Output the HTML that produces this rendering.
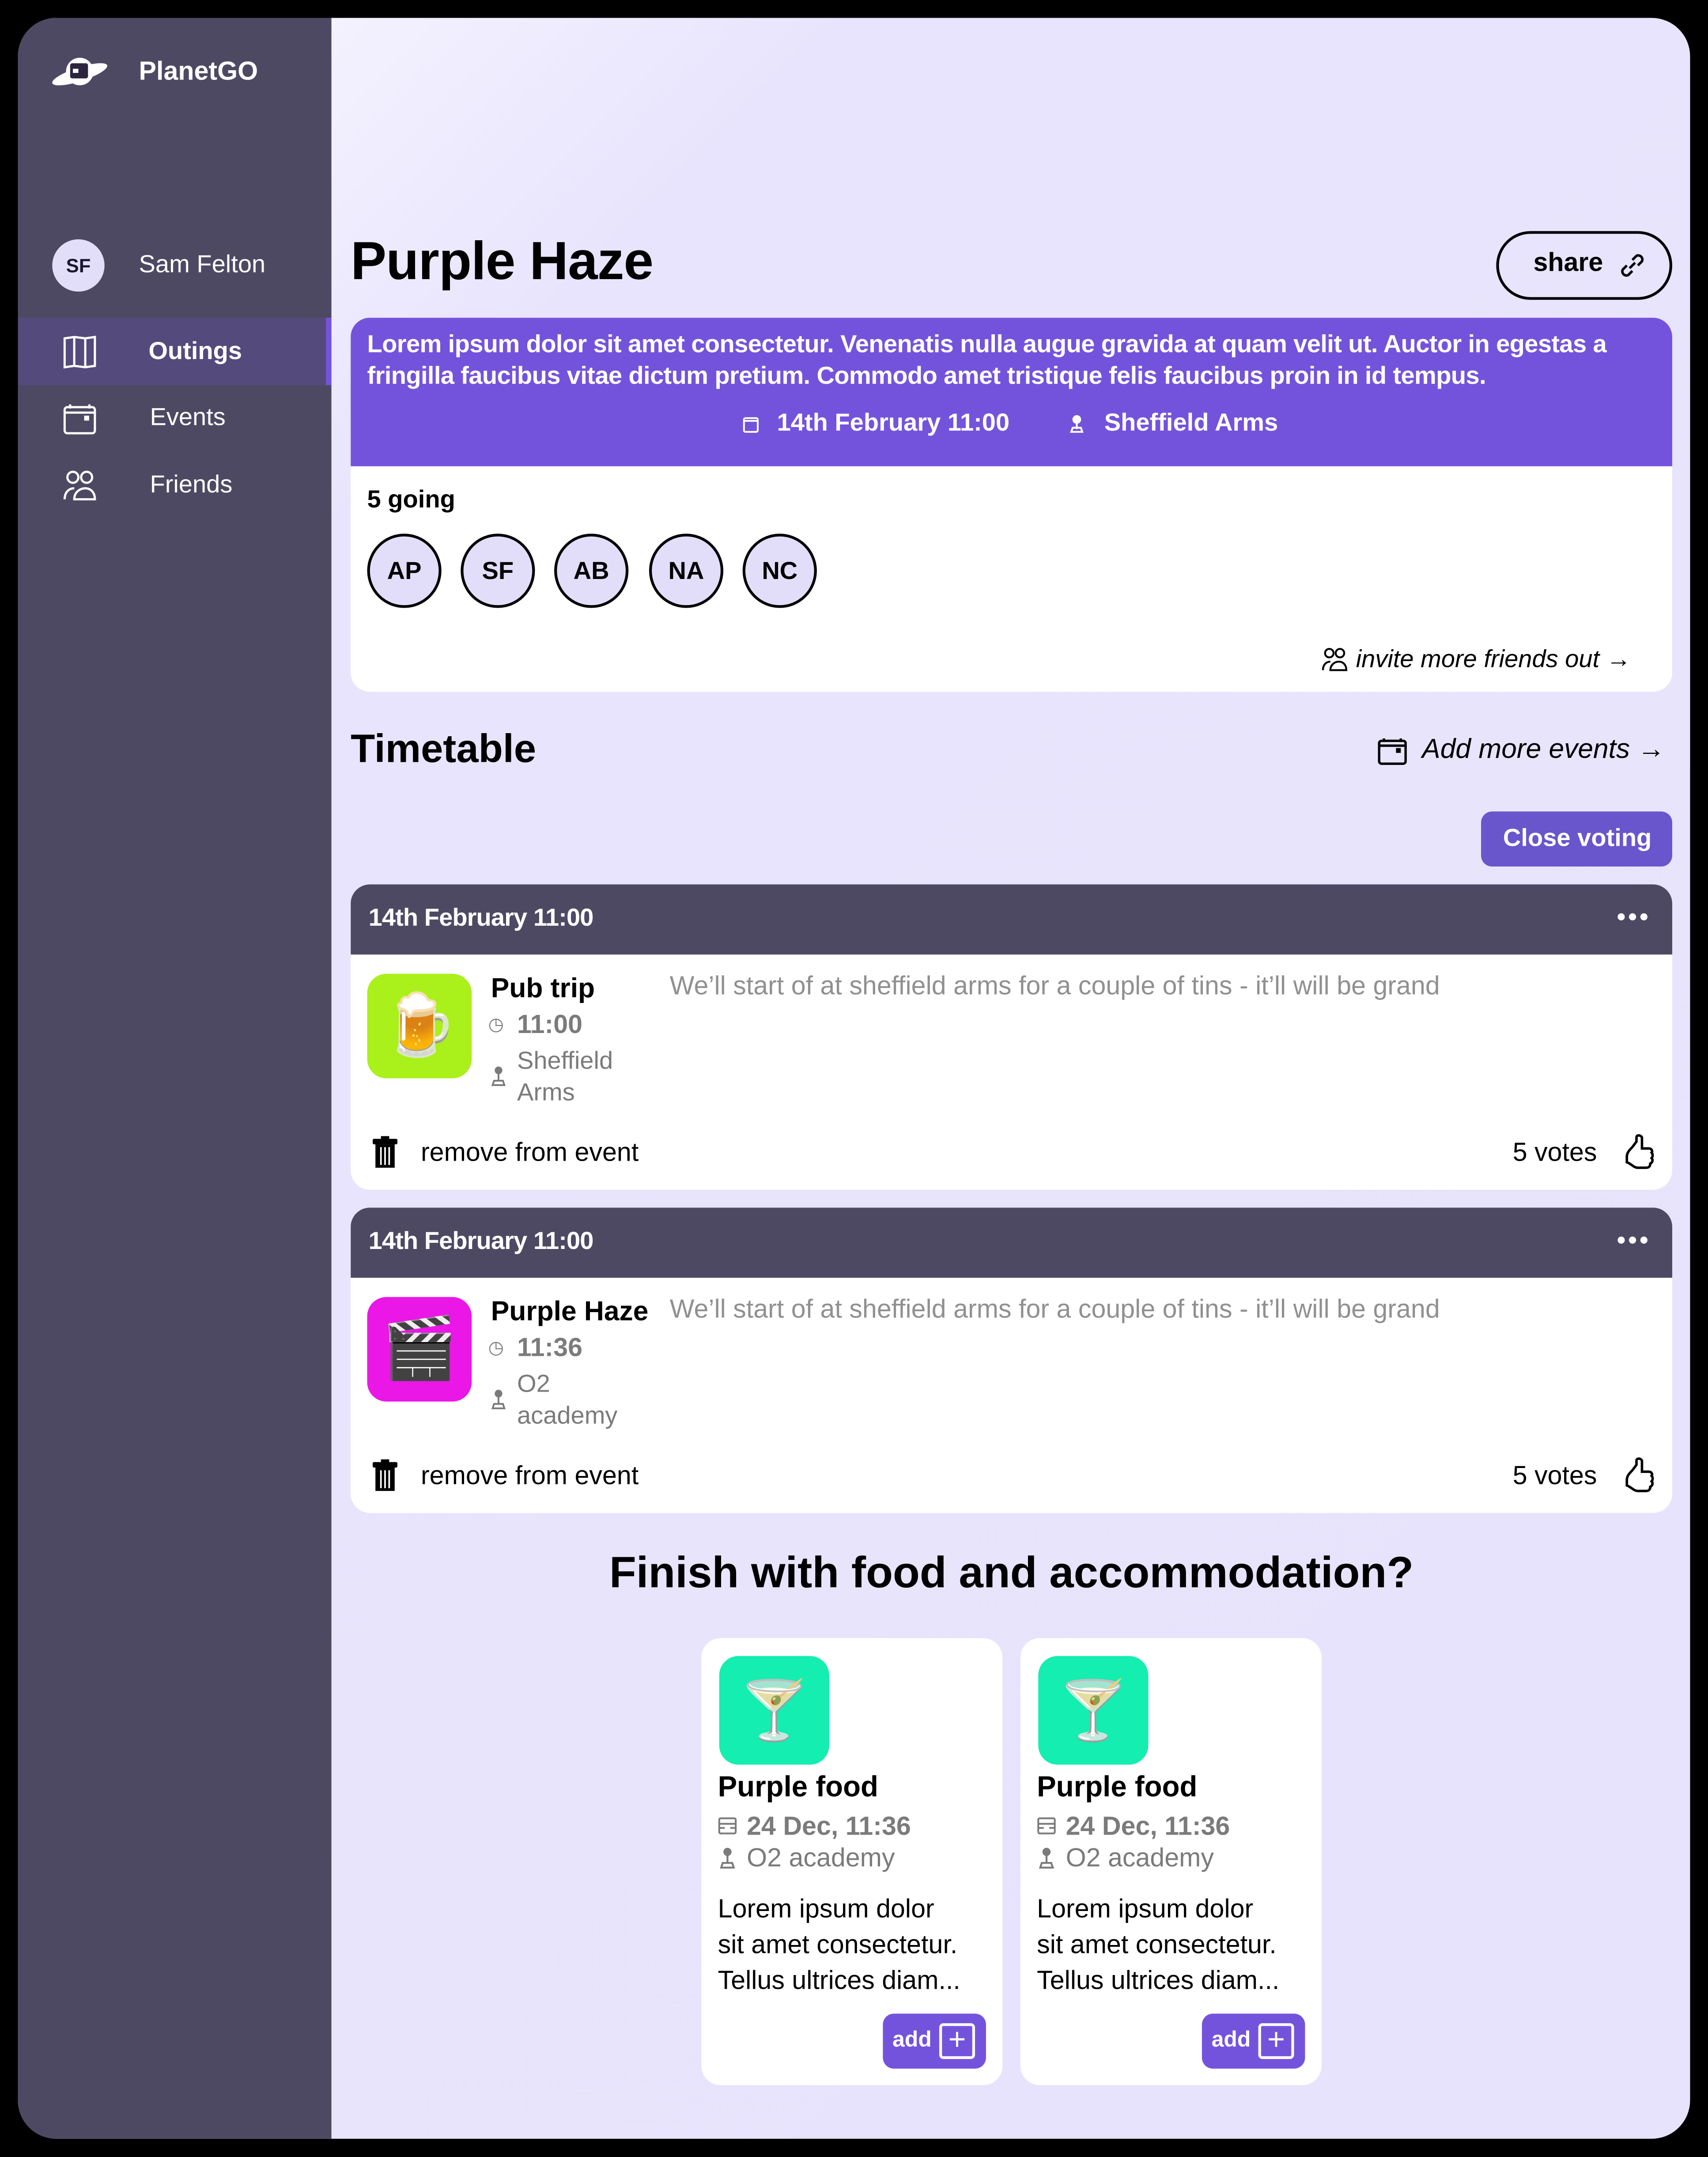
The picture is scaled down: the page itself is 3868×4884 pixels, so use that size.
<!DOCTYPE html>
<html><head><meta charset="utf-8"><style>
*{box-sizing:border-box;margin:0;padding:0}
html,body{width:3868px;height:4884px;overflow:hidden;background:#000}
#s{position:absolute;left:0;top:0;width:1242px;height:1568px;transform:scale(3.1143);transform-origin:0 0;font-family:"Liberation Sans",sans-serif;color:#000}
.a{position:absolute}
#frame{left:0;top:0;width:1242px;height:1568px;background:#000;border-radius:40px}
#main{left:13px;top:13px;width:1216px;height:1542px;border-radius:28px;overflow:hidden;background:linear-gradient(135deg,#fbfaff 0%,#e8e4fd 22%,#e7e3fc 100%)}
#side{left:0;top:0;width:228px;height:1542px;background:#4e4963}
.nav{color:#fff;font-size:18px}
.card{background:#fff;border-radius:14px;overflow:hidden}
.av{width:54px;height:54px;border:2px solid #000;border-radius:50%;background:#e2defa;font-weight:bold;font-size:18px;display:flex;align-items:center;justify-content:center}
.hdr{background:#4e4963;color:#fff;font-weight:bold;font-size:18px;height:51px;padding:14px 13px;letter-spacing:-0.3px}
.dots{right:16px;top:16px;color:#fff;font-size:12px;letter-spacing:1px}
.grey{color:#7b7b7b}
.btn{background:#7453dc;color:#fff;border-radius:8px}
</style></head><body><div id="s">
<div class="a" id="frame"></div>
<div class="a" id="main">
 <div class="a" id="side">
  <svg class="a" style="left:25px;top:27px" width="40" height="26" viewBox="0 0 40 26"><ellipse cx="20" cy="14" rx="21" ry="5" transform="rotate(-18 20 14)" fill="#fff"/><circle cx="20" cy="12" r="10" fill="#fff"/><rect x="13" y="6" width="13" height="11" rx="1.5" fill="#2b2540"/><rect x="15" y="10" width="4" height="3" fill="#fff"/></svg>
  <div class="a nav" style="left:88px;top:29px;font-weight:bold;font-size:19px">PlanetGO</div>
  <div class="a" style="left:25px;top:161px;width:38px;height:38px;border-radius:50%;background:#e2defa;font-weight:bold;font-size:14px;display:flex;align-items:center;justify-content:center;color:#1a1630">SF</div>
  <div class="a nav" style="left:88px;top:169px">Sam Felton</div>
  <div class="a" style="left:0;top:218px;width:228px;height:49px;background:#554a7c"></div>
  <div class="a" style="left:224px;top:218px;width:4px;height:49px;background:#7453dc"></div>
  <svg class="a" style="left:33px;top:231px" width="24" height="24" viewBox="0 0 24 24" fill="none" stroke="#fff" stroke-width="1.6"><path d="M1 2l7-1 8 1 7-1v21l-7 1-8-1-7 1z M8 1v21 M16 2v21"/></svg>
  <div class="a nav" style="left:95px;top:232px;font-weight:bold">Outings</div>
  <svg class="a" style="left:33px;top:280px" width="24" height="24" viewBox="0 0 24 24" fill="none" stroke="#fff" stroke-width="1.6"><rect x="1" y="3" width="22" height="19" rx="2"/><path d="M1 7h22M5 1v3M19 1v3"/><rect x="16" y="10" width="2" height="2" fill="#fff"/></svg>
  <div class="a nav" style="left:96px;top:280px">Events</div>
  <svg class="a" style="left:33px;top:329px" width="24" height="22" viewBox="0 0 24 22" fill="none" stroke="#fff" stroke-width="1.6"><circle cx="7" cy="5" r="4"/><circle cx="17" cy="5" r="4"/><path d="M1 21c0-5 3-8 7-8M8 21c0-5 4-8 8-8s7 3 7 8z"/></svg>
  <div class="a nav" style="left:96px;top:329px">Friends</div>
 </div>

 <div class="a" style="left:242px;top:156px;font-size:39px;font-weight:bold;letter-spacing:-0.3px">Purple Haze</div>
 <div class="a" style="left:1075px;top:155px;width:128px;height:50px;border:2.5px solid #000;border-radius:25px;font-size:19px;font-weight:bold;padding:11px 0 0 25px">share
  <svg class="a" style="left:85px;top:11px" width="24" height="24" viewBox="0 0 24 24" fill="none" stroke="#000" stroke-width="1.8"><path d="M10 14l4-4M8 12l-3 3a3 3 0 0 0 4 4l3-3M16 12l3-3a3 3 0 0 0-4-4l-3 3"/></svg></div>

 <div class="a card" style="left:242px;top:218px;width:961px;height:272px">
  <div class="a" style="left:0;top:0;width:961px;height:108px;background:#7453dc"></div>
  <div class="a" style="left:12px;top:8px;width:945px;color:#fff;font-size:18px;font-weight:bold;line-height:23px;letter-spacing:-0.2px">Lorem ipsum dolor sit amet consectetur. Venenatis nulla augue gravida at quam velit ut. Auctor in egestas a fringilla faucibus vitae dictum pretium. Commodo amet tristique felis faucibus proin in id tempus.</div>
  <svg class="a" style="left:285px;top:71px" width="12" height="13" viewBox="0 0 12 13" fill="none" stroke="#fff" stroke-width="1.3"><rect x="1" y="2" width="10" height="10" rx="1"/><path d="M1 4h10"/></svg>
  <div class="a" style="left:310px;top:66px;color:#fff;font-weight:bold;font-size:18px">14th February 11:00</div>
  <svg class="a" style="left:522px;top:70px" width="12" height="14" viewBox="0 0 12 14" fill="none" stroke="#fff" stroke-width="1.3"><circle cx="6" cy="4" r="2.5" fill="#fff"/><path d="M6 7v4M2 13l1-3h6l1 3z"/></svg>
  <div class="a" style="left:548px;top:66px;color:#fff;font-weight:bold;font-size:18px">Sheffield Arms</div>
  <div class="a" style="left:12px;top:122px;font-weight:bold;font-size:18px">5 going</div>
  <div class="a av" style="left:12px;top:157px">AP</div>
  <div class="a av" style="left:80px;top:157px">SF</div>
  <div class="a av" style="left:148px;top:157px">AB</div>
  <div class="a av" style="left:217px;top:157px">NA</div>
  <div class="a av" style="left:285px;top:157px">NC</div>
  <svg class="a" style="left:706px;top:240px" width="19" height="17" viewBox="0 0 24 22" fill="none" stroke="#000" stroke-width="1.8"><circle cx="7" cy="5" r="4"/><circle cx="17" cy="5" r="4"/><path d="M1 21c0-5 3-8 7-8M8 21c0-5 4-8 8-8s7 3 7 8z"/></svg>
  <div class="a" style="left:731px;top:238px;font-size:18px;font-style:italic">invite more friends out →</div>
 </div>

 <div class="a" style="left:242px;top:516px;font-size:29px;font-weight:bold">Timetable</div>
 <svg class="a" style="left:989px;top:523px" width="21" height="21" viewBox="0 0 24 24" fill="none" stroke="#000" stroke-width="2"><rect x="1" y="3" width="22" height="19" rx="2"/><path d="M1 7h22M5 1v3M19 1v3"/><rect x="16" y="10" width="2" height="2" fill="#000"/></svg>
 <div class="a" style="left:1021px;top:521px;font-size:20px;font-style:italic">Add more events →</div>
 <div class="a btn" style="left:1064px;top:577px;width:139px;height:40px;background:#6956cc;font-weight:bold;font-size:18px;padding:9px 0 0 16px">Close voting</div>

 <div class="a card" style="left:242px;top:630px;width:961px;height:222px">
  <div class="hdr">14th February 11:00</div><div class="a dots">●●●</div>
  <div class="a" style="left:12px;top:65px;width:76px;height:76px;border-radius:14px;background:#aaf01a;font-size:44px;text-align:center;line-height:76px">🍺</div>
  <div class="a" style="left:102px;top:65px;font-size:20px;font-weight:bold">Pub trip</div>
  <div class="a grey" style="left:100px;top:94px;font-size:13px">◷</div>
  <div class="a grey" style="left:121px;top:92px;font-size:19px;font-weight:bold">11:00</div>
  <div class="a grey" style="left:121px;top:117px;font-size:18px;line-height:23px">Sheffield<br>Arms</div>
  <svg class="a" style="left:101px;top:132px" width="13" height="15" viewBox="0 0 12 14" fill="none" stroke="#7b7b7b" stroke-width="1.2"><circle cx="6" cy="3" r="2" fill="#7b7b7b"/><path d="M6 5v5M2 13l1-3h6l1 3z"/></svg>
  <div class="a" style="left:232px;top:64px;font-size:19px;color:#909090">We’ll start of at sheffield arms for a couple of tins - it’ll will be grand</div>
  <svg class="a" style="left:15px;top:183px" width="20" height="25" viewBox="0 0 20 25"><rect x="1" y="2" width="18" height="4" rx="1"/><rect x="7" y="0" width="6" height="3"/><path d="M3 6h14v17H3z"/><path d="M7 8v13M10 8v13M13 8v13" stroke="#fff" stroke-width="1.2"/></svg>
  <div class="a" style="left:51px;top:185px;font-size:19px">remove from event</div>
  <div class="a" style="left:845px;top:185px;font-size:19px">5 votes</div>
  <svg class="a" style="left:925px;top:181px" width="24" height="28" viewBox="0 0 24 28" fill="none" stroke="#000" stroke-width="1.8"><path d="M3 17c0-3 2-5 4-7l3-4V3c0-2 3-2 4 0v8h5c2 0 3 2 2 3 1 1 1 3 0 4 1 1 1 3-1 4 0 2-1 3-3 3H11c-3 0-5-3-8-4z"/></svg>
 </div>

 <div class="a card" style="left:242px;top:865px;width:961px;height:222px">
  <div class="hdr">14th February 11:00</div><div class="a dots">●●●</div>
  <div class="a" style="left:12px;top:65px;width:76px;height:76px;border-radius:14px;background:#ea17e6;font-size:44px;text-align:center;line-height:76px">🎬</div>
  <div class="a" style="left:102px;top:65px;font-size:20px;font-weight:bold">Purple Haze</div>
  <div class="a grey" style="left:100px;top:94px;font-size:13px">◷</div>
  <div class="a grey" style="left:121px;top:92px;font-size:19px;font-weight:bold">11:36</div>
  <div class="a grey" style="left:121px;top:117px;font-size:18px;line-height:23px">O2<br>academy</div>
  <svg class="a" style="left:101px;top:132px" width="13" height="15" viewBox="0 0 12 14" fill="none" stroke="#7b7b7b" stroke-width="1.2"><circle cx="6" cy="3" r="2" fill="#7b7b7b"/><path d="M6 5v5M2 13l1-3h6l1 3z"/></svg>
  <div class="a" style="left:232px;top:64px;font-size:19px;color:#909090">We’ll start of at sheffield arms for a couple of tins - it’ll will be grand</div>
  <svg class="a" style="left:15px;top:183px" width="20" height="25" viewBox="0 0 20 25"><rect x="1" y="2" width="18" height="4" rx="1"/><rect x="7" y="0" width="6" height="3"/><path d="M3 6h14v17H3z"/><path d="M7 8v13M10 8v13M13 8v13" stroke="#fff" stroke-width="1.2"/></svg>
  <div class="a" style="left:51px;top:185px;font-size:19px">remove from event</div>
  <div class="a" style="left:845px;top:185px;font-size:19px">5 votes</div>
  <svg class="a" style="left:925px;top:181px" width="24" height="28" viewBox="0 0 24 28" fill="none" stroke="#000" stroke-width="1.8"><path d="M3 17c0-3 2-5 4-7l3-4V3c0-2 3-2 4 0v8h5c2 0 3 2 2 3 1 1 1 3 0 4 1 1 1 3-1 4 0 2-1 3-3 3H11c-3 0-5-3-8-4z"/></svg>
 </div>

 <div class="a" style="left:242px;top:1112px;width:961px;text-align:center;font-size:32px;font-weight:bold">Finish with food and accommodation?</div>

 <div class="a card" style="left:497px;top:1178px;width:219px;height:325px">
  <div class="a" style="left:13px;top:13px;width:80px;height:79px;border-radius:14px;background:#14eeb0;font-size:42px;text-align:center;line-height:79px">🍸</div>
  <div class="a" style="left:12px;top:97px;font-size:21px;font-weight:bold">Purple food</div>
  <svg class="a" style="left:12px;top:129px" width="14" height="14" viewBox="0 0 14 14" fill="none" stroke="#7b7b7b" stroke-width="1.3"><rect x="1" y="2" width="12" height="11" rx="1"/><path d="M1 6h12M1 9h4M9 9h4"/></svg>
  <div class="a grey" style="left:33px;top:127px;font-size:19px;font-weight:bold">24 Dec, 11:36</div>
  <svg class="a" style="left:12px;top:152px" width="14" height="16" viewBox="0 0 12 14" fill="none" stroke="#7b7b7b" stroke-width="1.2"><circle cx="6" cy="3" r="2" fill="#7b7b7b"/><path d="M6 5v5M2 13l1-3h6l1 3z"/></svg>
  <div class="a grey" style="left:33px;top:150px;font-size:19px">O2 academy</div>
  <div class="a" style="left:12px;top:185px;font-size:19px;line-height:26px;width:205px">Lorem ipsum dolor<br>sit amet consectetur.<br>Tellus ultrices diam...</div>
  <div class="a btn" style="left:132px;top:273px;width:75px;height:40px;font-weight:bold;font-size:16px;padding:11px 0 0 7px">add<div class="a" style="left:41px;top:7px;width:26px;height:26px;border:2px solid #fff;border-radius:3px;font-size:22px;line-height:20px;text-align:center;font-weight:normal">+</div></div>
 </div>
 <div class="a card" style="left:729px;top:1178px;width:219px;height:325px">
  <div class="a" style="left:13px;top:13px;width:80px;height:79px;border-radius:14px;background:#14eeb0;font-size:42px;text-align:center;line-height:79px">🍸</div>
  <div class="a" style="left:12px;top:97px;font-size:21px;font-weight:bold">Purple food</div>
  <svg class="a" style="left:12px;top:129px" width="14" height="14" viewBox="0 0 14 14" fill="none" stroke="#7b7b7b" stroke-width="1.3"><rect x="1" y="2" width="12" height="11" rx="1"/><path d="M1 6h12M1 9h4M9 9h4"/></svg>
  <div class="a grey" style="left:33px;top:127px;font-size:19px;font-weight:bold">24 Dec, 11:36</div>
  <svg class="a" style="left:12px;top:152px" width="14" height="16" viewBox="0 0 12 14" fill="none" stroke="#7b7b7b" stroke-width="1.2"><circle cx="6" cy="3" r="2" fill="#7b7b7b"/><path d="M6 5v5M2 13l1-3h6l1 3z"/></svg>
  <div class="a grey" style="left:33px;top:150px;font-size:19px">O2 academy</div>
  <div class="a" style="left:12px;top:185px;font-size:19px;line-height:26px;width:205px">Lorem ipsum dolor<br>sit amet consectetur.<br>Tellus ultrices diam...</div>
  <div class="a btn" style="left:132px;top:273px;width:75px;height:40px;font-weight:bold;font-size:16px;padding:11px 0 0 7px">add<div class="a" style="left:41px;top:7px;width:26px;height:26px;border:2px solid #fff;border-radius:3px;font-size:22px;line-height:20px;text-align:center;font-weight:normal">+</div></div>
 </div>
</div>
</div></body></html>
